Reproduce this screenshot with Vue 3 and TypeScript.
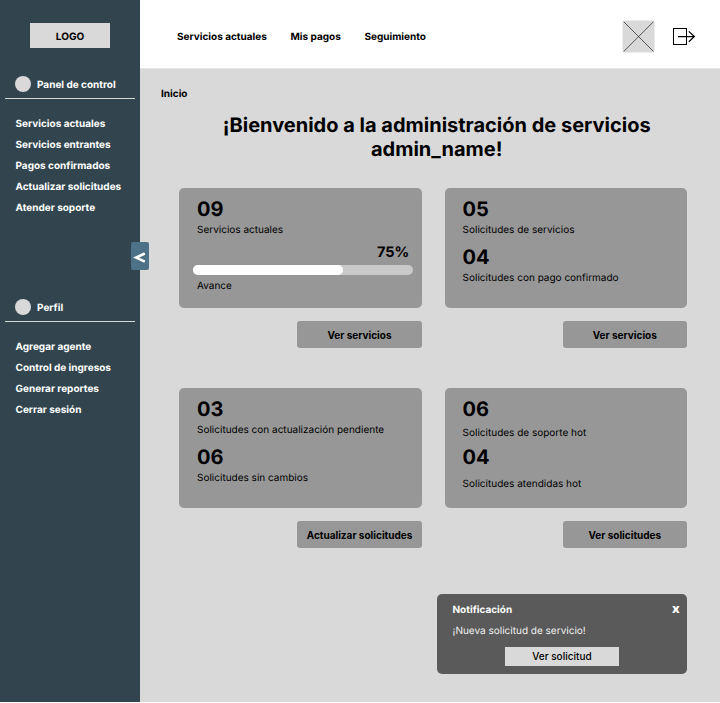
<script setup lang="ts">
interface Stat {
  value: string
  label: string
}
interface Card {
  id: string
  stats: Stat[]
  progress?: number
  action: string
  loose?: boolean
}

const topLinks: string[] = ['Servicios actuales', 'Mis pagos', 'Seguimiento']

const menus: { title: string; items: string[] }[] = [
  {
    title: 'Panel de control',
    items: [
      'Servicios actuales',
      'Servicios entrantes',
      'Pagos confirmados',
      'Actualizar solicitudes',
      'Atender soporte',
    ],
  },
  {
    title: 'Perfil',
    items: ['Agregar agente', 'Control de ingresos', 'Generar reportes', 'Cerrar sesión'],
  },
]

const cards: Card[] = [
  {
    id: 'current',
    stats: [{ value: '09', label: 'Servicios actuales' }],
    progress: 75,
    action: 'Ver servicios',
  },
  {
    id: 'requests',
    stats: [
      { value: '05', label: 'Solicitudes de servicios' },
      { value: '04', label: 'Solicitudes con pago confirmado' },
    ],
    action: 'Ver servicios',
  },
  {
    id: 'updates',
    stats: [
      { value: '03', label: 'Solicitudes con actualización pendiente' },
      { value: '06', label: 'Solicitudes sin cambios' },
    ],
    action: 'Actualizar solicitudes',
  },
  {
    id: 'support',
    stats: [
      { value: '06', label: 'Solicitudes de soporte hot' },
      { value: '04', label: 'Solicitudes atendidas hot' },
    ],
    action: 'Ver solicitudes',
    loose: true,
  },
]
</script>

<template>
  <div class="app">
    <aside class="sidebar">
      <div class="logo">LOGO</div>
      <nav v-for="menu in menus" :key="menu.title" class="menu">
        <h2 class="menu-title"><span class="dot"></span><span class="menu-name">{{ menu.title }}</span></h2>
        <ul class="menu-items">
          <li v-for="item in menu.items" :key="item">{{ item }}</li>
        </ul>
      </nav>
      <button class="collapse" aria-label="Contraer">
        <svg width="18" height="28" viewBox="0 0 18 28">
          <path d="M13.8 11.5 L5 15.6 L13.8 19.7" fill="none" stroke="#fff" stroke-width="2.5" />
        </svg>
      </button>
    </aside>

    <div class="page">
      <header class="topbar">
        <nav class="top-links">
          <a v-for="link in topLinks" :key="link">{{ link }}</a>
        </nav>
        <svg class="avatar" width="33" height="33" viewBox="0 0 33 33">
          <rect x="0.5" y="0.5" width="32" height="32" rx="3" fill="#d9d9d9" />
          <path d="M1.7 1.7 L31.5 31.5 M31.5 1.7 L1.7 31.5" stroke="#333" stroke-width="0.8" />
        </svg>
        <svg class="logout" width="24" height="18" viewBox="0 0 24 18">
          <rect x="0.5" y="1.5" width="13" height="16" fill="none" stroke="#000" />
          <path d="M5 9.6 H21.5 M15.8 4.4 L21.3 9.6 L15.8 14.8" fill="none" stroke="#000" stroke-width="1.3" />
        </svg>
      </header>

      <main class="content">
        <div class="crumb">Inicio</div>
        <h1 class="title">¡Bienvenido a la administración de servicios<br />admin_name!</h1>

        <section class="grid">
          <div v-for="card in cards" :key="card.id" class="cell">
            <article class="card" :class="{ loose: card.loose }">
              <div v-for="stat in card.stats" :key="stat.label" class="stat">
                <div class="value">{{ stat.value }}</div>
                <div class="label">{{ stat.label }}</div>
              </div>
              <div v-if="card.progress" class="progress">
                <div class="percent">{{ card.progress }}%</div>
                <div class="track"><div class="fill"></div></div>
                <div class="label">Avance</div>
              </div>
            </article>
            <button class="action">{{ card.action }}</button>
          </div>
        </section>

        <aside class="toast">
          <div class="toast-head">
            <span>Notificación</span>
            <span class="close">x</span>
          </div>
          <p class="toast-text">¡Nueva solicitud de servicio!</p>
          <button class="toast-action">Ver solicitud</button>
        </aside>
      </main>
    </div>
  </div>
</template>

<style>
body {
  margin: 0;
  background: #fff;
}
</style>

<style scoped>
* {
  box-sizing: border-box;
}
.app {
  display: flex;
  width: 720px;
  height: 702px;
  font-family: Inter, 'Liberation Sans', sans-serif;
  font-size: 10px;
  color: #000;
  text-rendering: geometricPrecision;
}
button {
  display: block;
  border: 0;
  padding: 0;
  font: inherit;
  color: inherit;
}
.sidebar {
  position: relative;
  width: 140px;
  background: #32454e;
  padding-top: 23px;
  color: #fff;
  font-weight: 700;
}
.logo {
  width: 79.5px;
  height: 25px;
  margin: 0 0 25px 30.3px;
  background: #d9d9d9;
  color: #000;
  font-size: 10.1px;
  line-height: 28px;
  text-align: center;
}
.menu {
  height: 223px;
}
.menu-title {
  display: flex;
  align-items: center;
  gap: 6px;
  height: 26px;
  margin: 0 5px;
  padding: 0 0 3px 10px;
  border-bottom: 1px solid #d3d8d3;
  font: inherit;
}
.menu-name {
  padding-top: 1px;
}
.dot {
  width: 16px;
  height: 16px;
  border-radius: 50%;
  background: #d9d9d9;
}
.menu-items {
  margin: 15px 0 0;
  padding: 0 0 0 15.5px;
  list-style: none;
  line-height: 21px;
  white-space: nowrap;
}
.collapse {
  position: absolute;
  top: 242px;
  left: 131px;
  width: 18px;
  height: 28px;
  border-radius: 2px;
  background: #4d7186;
}
.collapse svg {
  display: block;
}
.page {
  display: flex;
  flex-direction: column;
  width: 580px;
}
.topbar {
  display: flex;
  align-items: center;
  height: 69px;
  padding: 4px 23px 0 37px;
  border-bottom: 1px solid #e6e6e6;
  background: #fff;
  font-weight: 700;
}
.top-links {
  display: flex;
  gap: 23.7px;
  margin-right: auto;
  padding-top: 2px;
}
.avatar {
  margin-right: 18px;
}
.content {
  flex: 1;
  padding: 17px 33px 0 39.4px;
  background: #d9d9d9;
}
.crumb {
  margin-left: -18.4px;
  font-weight: 700;
  line-height: 16px;
}
.title {
  margin: 11px 0 27.3px;
  padding-left: 7px;
  font-size: 20px;
  font-weight: 700;
  line-height: 24px;
  text-align: center;
  white-space: nowrap;
}
.grid {
  display: grid;
  grid-template-columns: 242.3px 242px;
  gap: 40px 23.3px;
}
.cell {
  height: 160px;
}
.card {
  height: 119.5px;
  padding: 8.7px 8.5px 0 17.6px;
  border-radius: 5px;
  background: #979797;
}
.stat {
  height: 47.5px;
}
.stat + .stat {
  padding-top: 0.5px;
}
.value {
  font-size: 20px;
  font-weight: 700;
  line-height: 25px;
}
.label {
  line-height: 16px;
}
.loose .stat .label {
  padding-top: 3px;
}
.loose .stat:last-child .label {
  padding-top: 6px;
}
.percent {
  margin-right: 4px;
  font-size: 14.5px;
  font-weight: 700;
  line-height: 17px;
  text-align: right;
}
.track {
  height: 10.5px;
  margin: 3.5px 0 2.5px -4px;
  border-radius: 6px;
  background: #c9c9c9;
}
.fill {
  width: 150px;
  height: 100%;
  border-radius: 6px;
  background: #fff;
}
.action {
  width: 124.4px;
  height: 27.5px;
  margin: 13.2px 0 0 auto;
  border-radius: 3px;
  background: #979797;
  font-weight: 700;
}
.toast {
  width: 250px;
  height: 80px;
  margin: 45.7px 0 0 auto;
  padding: 8px 7.2px 0 15.5px;
  border-radius: 5px;
  background: #5a5a5a;
  color: #fff;
}
.toast-head {
  display: flex;
  justify-content: space-between;
  font-weight: 700;
  line-height: 16px;
}
.close {
  font-size: 13px;
  font-weight: 800;
  line-height: 14px;
}
.toast-text {
  margin: 5px 0 8px;
  color: #efefef;
  line-height: 16px;
}
.toast-action {
  width: 113.5px;
  height: 19px;
  margin-left: 52.7px;
  background: #d9d9d9;
  color: #000;
  font-weight: 500;
}
</style>
